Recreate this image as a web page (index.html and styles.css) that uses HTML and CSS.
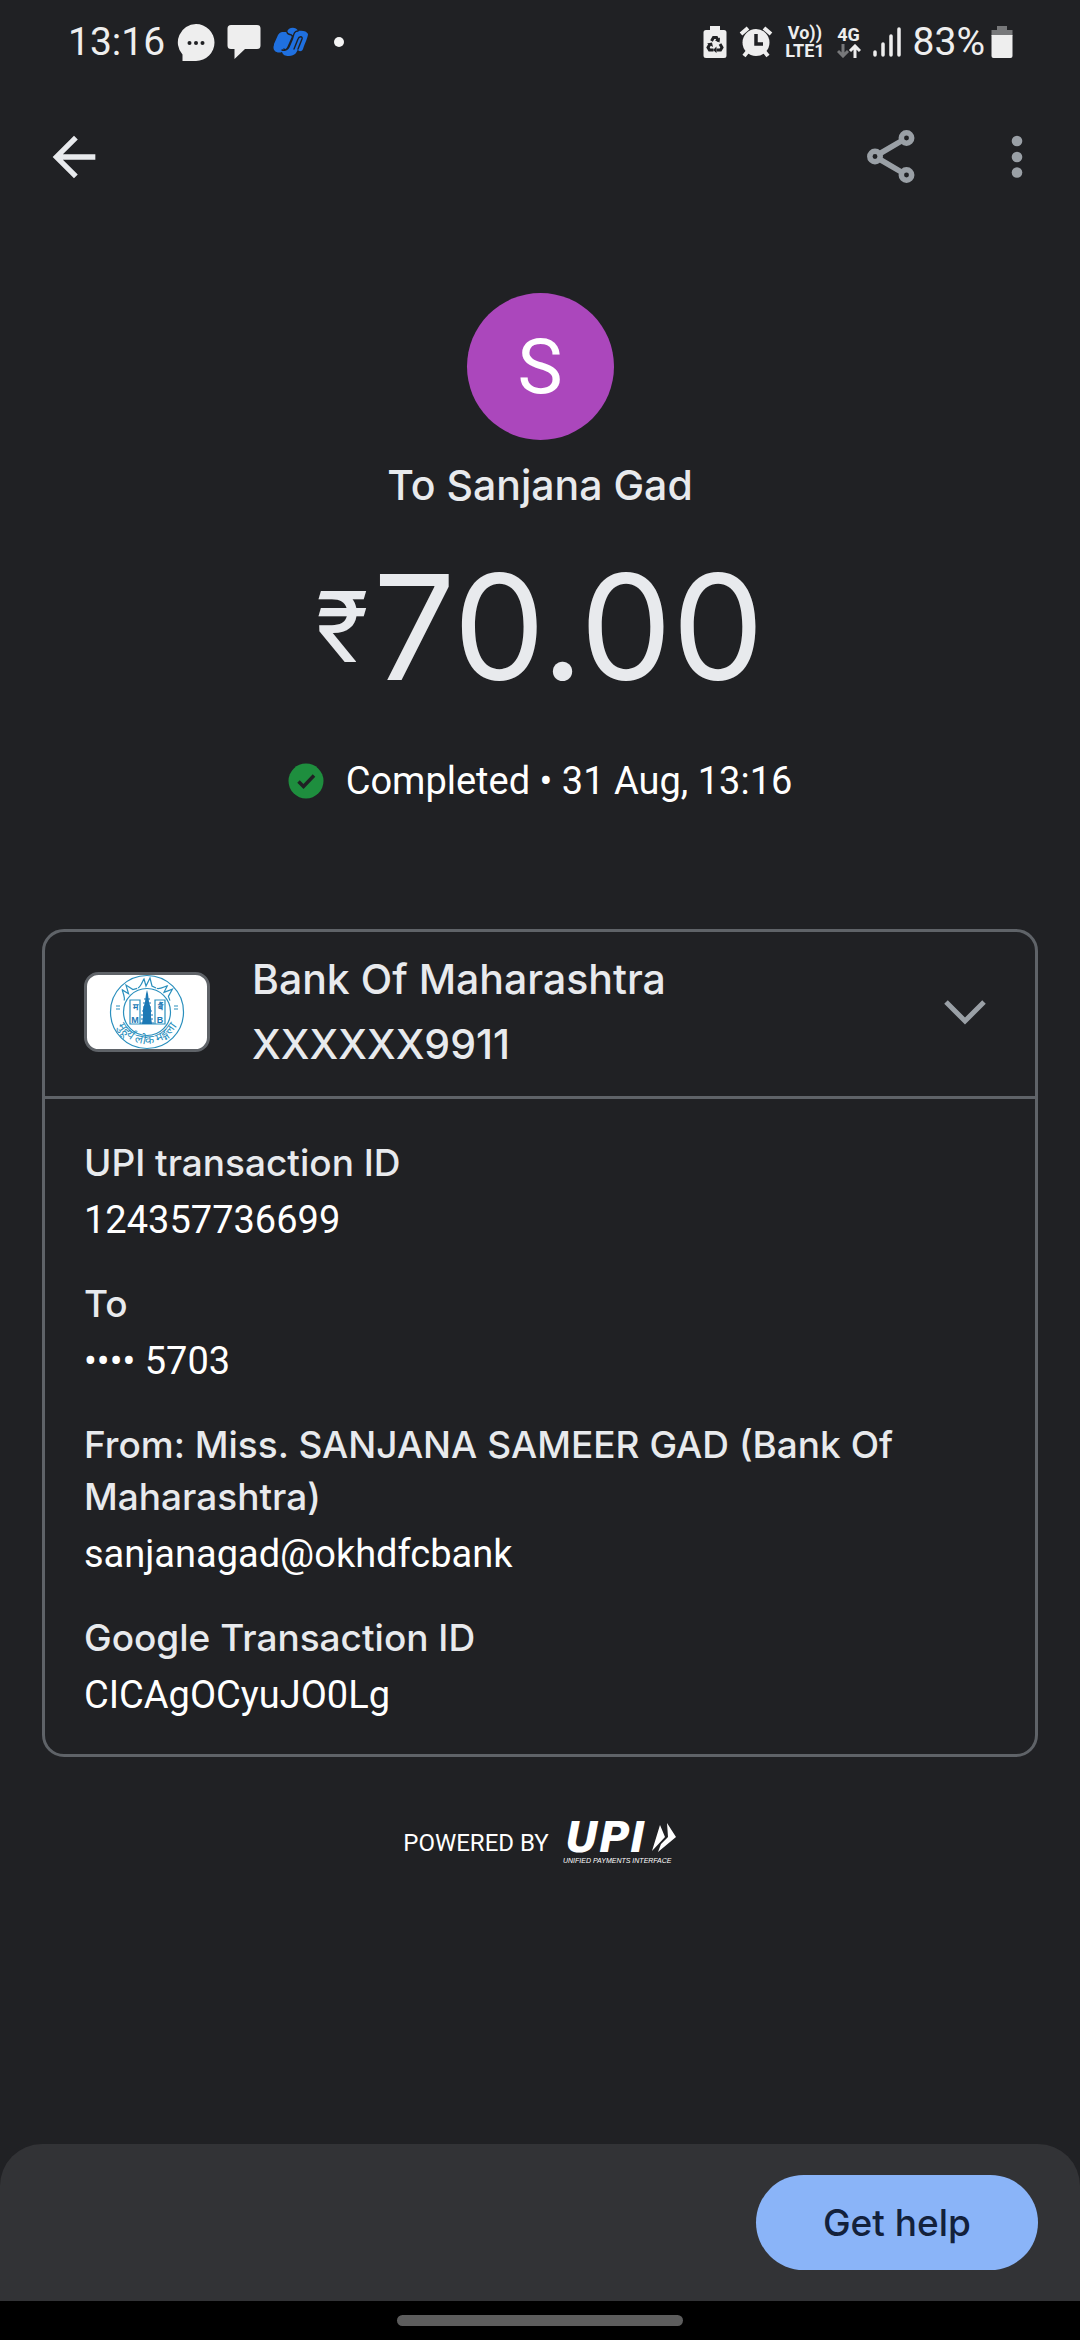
FILE: index.html
```html
<!DOCTYPE html>
<html lang="en">
<head>
<meta charset="utf-8">
<meta name="viewport" content="width=device-width, initial-scale=1">
<title>Payment to Sanjana Gad</title>
<link rel="stylesheet" href="styles.css">
</head>
<body>
<div class="screen">
  <div class="statusbar">
    <div class="status-group">
      <span class="clock">13:16</span>
      <svg width="38" height="38" viewBox="0 0 38 38" aria-hidden="true"><path fill="#eee" d="M19 1a18 18 0 1 1 0 37H5.500v-6.500A18.300 18.300 0 0 1 19 1z"/><g fill="#202124"><circle cx="12.500" cy="20" r="2"/><circle cx="19" cy="20" r="2"/><circle cx="25.500" cy="20" r="2"/></g></svg>
      <svg width="34" height="34" viewBox="0 0 34 34" aria-hidden="true"><path fill="#eee" d="M4 0h26a3.500 3.500 0 0 1 3.500 3.500v17A3.500 3.500 0 0 1 30 24H18L7.500 34V24H4A3.500 3.500 0 0 1 .5 20.500v-17A3.500 3.500 0 0 1 4 0z"/></svg>
      <svg width="36" height="30" viewBox="0 0 36 30" aria-hidden="true"><path fill="#1f70e0" d="M1 17L5 8c2-4 6-3 9-3 1-5 9-6 11-1 4-1 9 0 10 3 0 3-3 9-5 15-1 3-5 3-5 0-1 3-3 7-9 7-4 0-6-1-7-4-6 2-10-2-8-7z"/><path fill="none" stroke="#202124" stroke-width="1.400" stroke-linecap="round" d="M14 5c0 4 7 1 5 6l-4 9c-1 3-4 4-6 3M25 4c-5 0-4 5-6 9l-3 7c-1 2-4 4-5 2M25 22l4-10c1-3-3-3-4 0l-4 10"/></svg>
      <svg width="30" height="10" viewBox="0 0 30 10" aria-hidden="true"><circle cx="18" cy="5" r="5" fill="#f4f4f4"/></svg>
    </div>
    <div class="status-group">
      <svg width="24" height="34" viewBox="0 0 24 34" aria-hidden="true"><path fill="#eee" d="M7 1h10v4h4a2.500 2.500 0 0 1 2.500 2.500v23A2.500 2.500 0 0 1 21 33H3a2.500 2.500 0 0 1-2.500-2.500v-23A2.500 2.500 0 0 1 3 5h4z"/><path fill="none" stroke="#202124" stroke-width="3" d="M8.500 16l2-3.500h3l2 3.500M17 19l2 3.500-1.500 2.500H13.500M10.500 25H6.500L5 22.500 7 19"/><path fill="#202124" d="M17 12.500l-.5 5-4.500-2zM13.500 21.500v6.500l-3.500-3zM4 18.500l5-1 1 4.500z"/></svg>
      <svg width="34" height="34" viewBox="0 0 34 34" aria-hidden="true"><g stroke="#eee" stroke-width="4"><path d="M2 9l7-6M25 3l7 6M9 26l-4 5M25 26l4 5"/></g><circle cx="17" cy="17.500" r="13.500" fill="#eee"/><path d="M17 9v10h7" fill="none" stroke="#202124" stroke-width="3.500"/></svg>
      <span class="net"><span>Vo))</span><span>LTE1</span></span>
      <span class="net"><span>4G</span>
        <svg width="24" height="14" viewBox="0 0 24 14" aria-hidden="true"><path d="M6 0v12M1 7l5 5 5-5" fill="none" stroke="#77787a" stroke-width="3"/><path d="M18 14V2M13 7l5-5 5 5" fill="none" stroke="#eee" stroke-width="3"/></svg></span>
      <svg width="28" height="32" viewBox="0 0 28 32" aria-hidden="true"><g stroke="#eee" stroke-width="3.500" stroke-linecap="round"><path d="M2 26v3M10 18v11M18 10v19M26 3v26"/></g></svg>
      <span class="battery"><span>83%</span>
        <svg width="22" height="34" viewBox="0 0 22 34" aria-hidden="true"><path fill="#77787a" d="M6 1h10v4h5.500v6H.5V5H6z"/><path fill="#eee" d="M.5 10h21v21a2 2 0 0 1-2 2h-17a2 2 0 0 1-2-2z"/></svg></span>
    </div>
  </div>

  <header class="topbar">
    <button class="icon-button" aria-label="Back"><svg width="64" height="64" viewBox="0 0 24 24" aria-hidden="true"><path fill="#e8eaed" d="M20 11H7.830l5.590-5.590L12 4l-8 8 8 8 1.410-1.410L7.830 13H20v-2z"/></svg></button>
    <div class="topbar-actions">
      <button class="icon-button" aria-label="Share"><svg width="64" height="64" viewBox="0 0 64 64" aria-hidden="true"><g fill="none" stroke="#9aa0a6" stroke-width="5.500"><circle cx="16" cy="31.500" r="5.200"/><circle cx="47.500" cy="13" r="5.200"/><circle cx="47.500" cy="50" r="5.200"/><path d="M21 28.500l22-12.800M21 34.500l22 12.800"/></g></svg></button>
      <button class="icon-button" aria-label="More options"><svg width="64" height="64" viewBox="0 0 64 64" aria-hidden="true"><g fill="#9aa0a6"><circle cx="32" cy="16" r="5.300"/><circle cx="32" cy="32" r="5.300"/><circle cx="32" cy="47.500" r="5.300"/></g></svg></button>
    </div>
  </header>

  <main class="content">
    <section class="summary">
      <div class="avatar">S</div>
      <h1 class="payee">To Sanjana Gad</h1>
      <p class="amount"><span class="currency">₹</span><span>70.00</span></p>
      <p class="state"><svg width="36" height="36" viewBox="0 0 36 36" aria-hidden="true"><circle cx="18" cy="18" r="17.500" fill="#1e8e3e"/><path d="M10.500 18.500l5 5 10.500-11" fill="none" stroke="#202124" stroke-width="3.500"/></svg><span>Completed • 31 Aug, 13:16</span></p>
    </section>

    <section class="card">
      <button class="account" aria-expanded="true">
        <svg class="bank-logo" width="126" height="80" viewBox="0 0 126 80" role="img" aria-label="Bank of Maharashtra">
          <rect x="1.500" y="1.500" width="123" height="77" rx="13" fill="#fff" stroke="#5f6368" stroke-width="3"/>
          <g fill="none" stroke="#2a8fbd" stroke-width="1.200"><circle cx="63" cy="40" r="36.500"/><circle cx="63" cy="40" r="23.500"/>
          <path id="peak" d="M54 16c3-1 5-8 6-9l2 7 4-8 2 8 4 2"/><use href="#peak" transform="rotate(-43 63 40)"/><use href="#peak" transform="rotate(43 63 40)"/>
          <path d="M46 28h10v24H46zM71 28h10v24H71zM46 52h35M32 34h4M32 37h4M90 34h4M90 37h4"/></g>
          <path fill="#1c79b5" d="M63 18l1 4 1 8 2 7v8l1 7H58l1-7v-8l2-7 1-8z"/>
          <path fill="none" stroke="#1c79b5" stroke-width="1" d="M60 27h6M59 31h8M59 35h8M58 39h10M57 43h12M57 47h12M56 51h14"/>
          <g class="logo-text"><text x="51" y="51">M</text><text x="76" y="51">B</text><text x="51" y="38">म</text><text x="76" y="38">बैं</text></g>
          <path id="motto" fill="none" d="M30 39A33 33 0 0 0 96 39"/>
          <text class="logo-motto"><textPath href="#motto" startOffset="50%">मुहूर्यं लोक मङ्गला</textPath></text>
        </svg>
        <span class="account-name"><span>Bank Of Maharashtra</span><span>XXXXXX9911</span></span>
        <svg class="chevron" width="44" height="28" viewBox="0 0 44 28" aria-hidden="true"><path d="M3 4l19 19L41 4" fill="none" stroke="#9aa0a6" stroke-width="5"/></svg>
      </button>
      <dl class="details">
        <div><dt>UPI transaction ID</dt><dd>124357736699</dd></div>
        <div><dt>To</dt><dd>•••• 5703</dd></div>
        <div><dt>From: Miss. SANJANA SAMEER GAD (Bank Of Maharashtra)</dt><dd>sanjanagad@okhdfcbank</dd></div>
        <div><dt>Google Transaction ID</dt><dd>CICAgOCyuJO0Lg</dd></div>
      </dl>
    </section>

    <div class="powered">
      <span>POWERED BY</span>
      <svg class="upi-logo" width="114" height="44" viewBox="0 0 114 44" role="img" aria-label="UPI, Unified Payments Interface">
        <text class="upi-word" x="2" y="31">UPI</text>
        <path fill="#fff" d="M104 2l9 14-18 15 3-8 7-7zM97 4l5 12-13 14z"/>
        <text class="upi-tag" x="0" y="42">UNIFIED PAYMENTS INTERFACE</text>
      </svg>
    </div>
  </main>

  <footer class="actions"><button class="help">Get help</button></footer>
  <div class="navbar"><span class="handle"></span></div>
</div>
</body>
</html>
```

FILE: styles.css
```css
* { box-sizing: border-box; }

body {
  margin: 0;
  background: #202124;
  color: #fff;
  font-family: Roboto, "Noto Sans", sans-serif;
  font-size: 38px;
}

h1, p, dl, dd { margin: 0; }

svg { display: block; flex: none; }

button {
  border: 0;
  padding: 0;
  background: none;
  color: inherit;
  font: inherit;
  cursor: pointer;
}

.screen {
  display: flex;
  flex-direction: column;
  min-height: 100vh;
}

.statusbar {
  display: flex;
  justify-content: space-between;
  align-items: center;
  height: 84px;
  padding: 0 67px 0 68px;
  color: #eee;
  font-size: 39px;
}

.status-group {
  display: flex;
  align-items: center;
  gap: 12px;
}

.battery {
  display: flex;
  align-items: center;
  gap: 6px;
}

.net {
  display: flex;
  flex-direction: column;
  align-items: center;
  font-size: 18px;
  line-height: 18px;
  font-weight: 700;
}

.topbar {
  display: flex;
  justify-content: space-between;
  padding: 41px 31px 0 42px;
}

.topbar-actions { display: flex; gap: 62px; }

.content {
  flex: 1;
  padding: 104px 42px 0;
}

.summary {
  display: flex;
  flex-direction: column;
  align-items: center;
  color: #e8eaed;
}

.avatar {
  display: flex;
  align-items: center;
  justify-content: center;
  width: 147px;
  height: 147px;
  border-radius: 50%;
  background: #ab47bc;
  color: #fff;
  font-size: 76px;
}

.payee,
.account-name,
.details dt,
.help {
  font-family: Inter, Roboto, sans-serif;
  font-weight: 500;
}

.payee {
  margin-top: 17px;
  font-size: 41px;
  line-height: 56px;
}

.amount {
  display: flex;
  align-items: center;
  gap: 4px;
  margin-top: 44px;
  font-family: Inter, sans-serif;
  font-size: 146px;
  line-height: 140px;
}

.currency { font-size: 98px; }

.state {
  display: flex;
  align-items: center;
  gap: 22px;
  margin-top: 60px;
  color: #fff;
  line-height: 48px;
}

.card {
  margin-top: 124px;
  border: 3px solid #5f6368;
  border-radius: 22px;
}

.account {
  display: flex;
  align-items: center;
  width: 100%;
  padding: 15px 48px 19px 39px;
  border-bottom: 3px solid #5f6368;
  color: #e8eaed;
  text-align: left;
}

.account-name {
  display: flex;
  flex: 1;
  flex-direction: column;
  padding-left: 42px;
  font-size: 41px;
  line-height: 65px;
}

.logo-text {
  fill: #1c79b5;
  font: 700 9px "Liberation Sans", sans-serif;
  text-anchor: middle;
}

.logo-motto {
  fill: #2a8fbd;
  font: 12px "Noto Sans", sans-serif;
  text-anchor: middle;
}

.details {
  display: flex;
  flex-direction: column;
  gap: 32px;
  padding: 38px 39px 33px;
  line-height: 52px;
}

.details dt {
  color: #e8eaed;
  font-size: 37px;
}

.details dd { margin-top: 5px; }

.powered {
  display: flex;
  align-items: center;
  justify-content: center;
  gap: 14px;
  padding: 64px 0;
  font-size: 24px;
}

.upi-logo { overflow: visible; }

.upi-word {
  fill: #fff;
  font: italic 700 42px "DejaVu Sans", sans-serif;
}

.upi-tag {
  fill: #fff;
  font: italic 7px "Liberation Sans", sans-serif;
}

.actions {
  display: flex;
  justify-content: flex-end;
  padding: 31px 42px;
  border-radius: 42px 42px 0 0;
  background: #323336;
}

.help {
  padding: 0 67px;
  border-radius: 48px;
  background: #8ab4f8;
  color: #13213b;
  font-size: 37px;
  line-height: 95px;
}

.navbar {
  display: flex;
  justify-content: center;
  align-items: center;
  height: 39px;
  background: #000;
}

.handle {
  width: 286px;
  height: 11px;
  border-radius: 6px;
  background: #5d5d5d;
}
```
